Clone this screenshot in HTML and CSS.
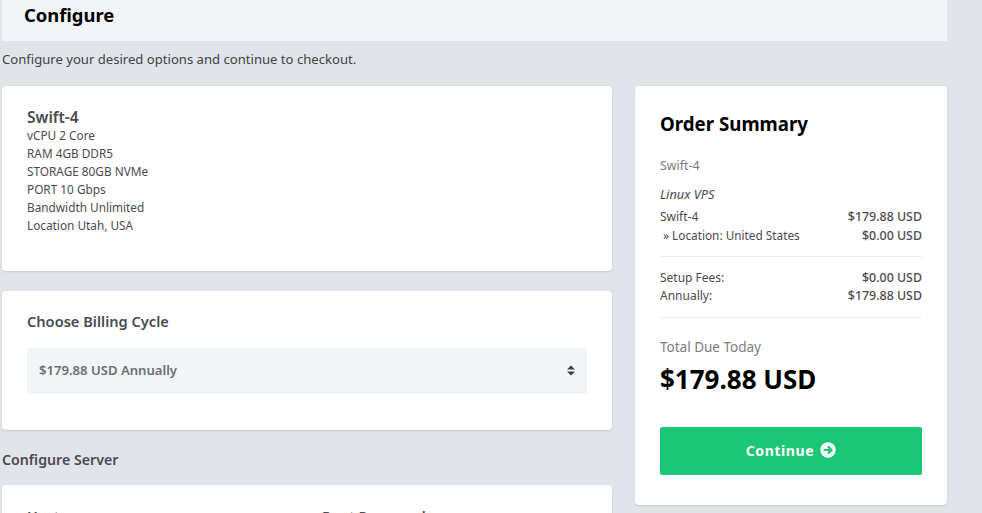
FILE: index.html
```html
<!DOCTYPE html>
<html lang="en">
<head>
<meta charset="utf-8">
<title>Configure</title>
<link rel="stylesheet" href="styles.css">
</head>
<body>
<div class="page">
  <header class="band"><h1>Configure</h1></header>
  <p class="intro">Configure your desired options and continue to checkout.</p>
  <div class="columns">
    <main class="main">
      <section class="card product">
        <h2>Swift-4</h2>
        <ul class="specs">
          <li>vCPU 2 Core</li>
          <li>RAM 4GB DDR5</li>
          <li>STORAGE 80GB NVMe</li>
          <li>PORT 10 Gbps</li>
          <li>Bandwidth Unlimited</li>
          <li>Location Utah, USA</li>
        </ul>
      </section>
      <section class="card billing">
        <h3>Choose Billing Cycle</h3>
        <div class="select">
          <span>$179.88 USD Annually</span>
          <svg class="updown" width="8" height="11" viewBox="0 0 8 11"><path d="M4 0.5 8 4.4H0zM0 6.6h8L4 10.5z" fill="#3c4048"/></svg>
        </div>
      </section>
      <h3 class="section-title">Configure Server</h3>
      <section class="card server">
        <div class="field">Hostname</div>
        <div class="field">Root Password</div>
      </section>
    </main>
    <aside class="card summary">
      <h2 class="summary-title">Order Summary</h2>
      <div class="group-name">Swift-4</div>
      <div class="category">Linux VPS</div>
      <div class="line"><span>Swift-4</span><span class="amt">$179.88 USD</span></div>
      <div class="line"><span class="sub">» Location: United States</span><span class="amt">$0.00 USD</span></div>
      <hr>
      <div class="line"><span>Setup Fees:</span><span class="amt">$0.00 USD</span></div>
      <div class="line"><span>Annually:</span><span class="amt">$179.88 USD</span></div>
      <hr class="second">
      <div class="due-label">Total Due Today</div>
      <div class="due">$179.88 USD</div>
      <button class="continue" type="button">Continue
        <svg width="16" height="16" viewBox="0 0 16 16"><circle cx="8" cy="8" r="7.7" fill="#fff"/><path d="M3.6 8h7.6M7.9 4.4 11.5 8l-3.6 3.6" fill="none" stroke="#1cc677" stroke-width="2.2"/></svg>
      </button>
    </aside>
  </div>
</div>
</body>
</html>
```
FILE: styles.css
```css
* { box-sizing: border-box; }
html, body { margin: 0; height: 513px; overflow: hidden; }
body {
  background: #e1e5ea;
  font-family: "Noto Sans", "Open Sans", sans-serif;
  color: #4a4a4f;
  font-size: 13px;
}
.page { width: 947px; padding-left: 2px; }
.band {
  height: 41px;
  background: #f2f5f8;
  padding: 3px 0 0 22px;
}
.band h1 {
  margin: 0;
  font-size: 18.4px;
  line-height: 24px;
  font-weight: 700;
  color: #000;
}
.intro {
  margin: 9px 0 17px;
  font-size: 13.1px;
  line-height: 19px;
  color: #3f4247;
}
.columns {
  display: grid;
  grid-template-columns: 610px 312px;
  column-gap: 23px;
  align-items: start;
}
.card {
  background: #fff;
  border-radius: 4px;
  box-shadow: 0 1px 2px rgba(60, 70, 85, .18);
}
.product { height: 185px; padding: 22px 25px; margin-bottom: 20px; }
.product h2 {
  margin: 0;
  font-size: 15.5px;
  line-height: 18px;
  font-weight: 600;
}
.specs {
  list-style: none;
  margin: 0;
  padding: 0;
  font-size: 11.8px;
  line-height: 18px;
}
.billing { height: 139px; padding: 20px 25px; }
.billing h3 {
  margin: 0;
  font-size: 14.6px;
  line-height: 20px;
  font-weight: 600;
}
.section-title {
  margin: 20px 0 15px;
  font-size: 14.2px;
  line-height: 20px;
  font-weight: 600;
}
.select {
  margin-top: 17px;
  height: 46px;
  background: #f2f5f8;
  border-radius: 2px;
  padding: 0 12px 2px;
  display: flex;
  align-items: center;
  justify-content: space-between;
  font-size: 13.1px;
  font-weight: 600;
  color: #6a6d74;
}
.updown { display: block; }
.server {
  height: 120px;
  padding: 22px 25px;
  display: grid;
  grid-template-columns: 295px 1fr;
  font-size: 14.4px;
  font-weight: 600;
}
.summary { height: 419px; padding: 25px 25px; }
.summary-title {
  margin: 0 0 21px;
  font-size: 18.7px;
  line-height: 25px;
  font-weight: 700;
  color: #000;
}
.group-name { font-size: 12.4px; line-height: 18px; color: #78787f; }
.category { margin: 10px 0 5px; font-size: 12.8px; line-height: 18px; font-style: italic; color: #4a4a4f; }
.line {
  display: flex;
  justify-content: space-between;
  align-items: baseline;
  height: 18px;
  font-size: 12px;
  line-height: 18px;
  color: #4a4a4f;
}
.sub { padding-left: 3px; font-size: 11.8px; }
.amt { font-weight: 500; font-size: 12.4px; }
hr {
  border: 0;
  height: 1px;
  background: #eceef0;
  margin: 12px 0 12px;
}
hr.second { margin: 12px 0 20px; }
.due-label { font-size: 13.5px; line-height: 19px; color: #7c7c84; }
.due {
  margin-top: 6px;
  font-size: 26px;
  line-height: 32px;
  font-weight: 700;
  color: #000;
}
.continue {
  margin-top: 32px;
  width: 100%;
  height: 48px;
  padding: 0 0 2px;
  border: 0;
  border-radius: 2px;
  background: #1cc677;
  color: #fff;
  font: 700 14px "Noto Sans", sans-serif;
  letter-spacing: .6px;
  display: flex;
  align-items: center;
  justify-content: center;
  gap: 6px;
}
```
